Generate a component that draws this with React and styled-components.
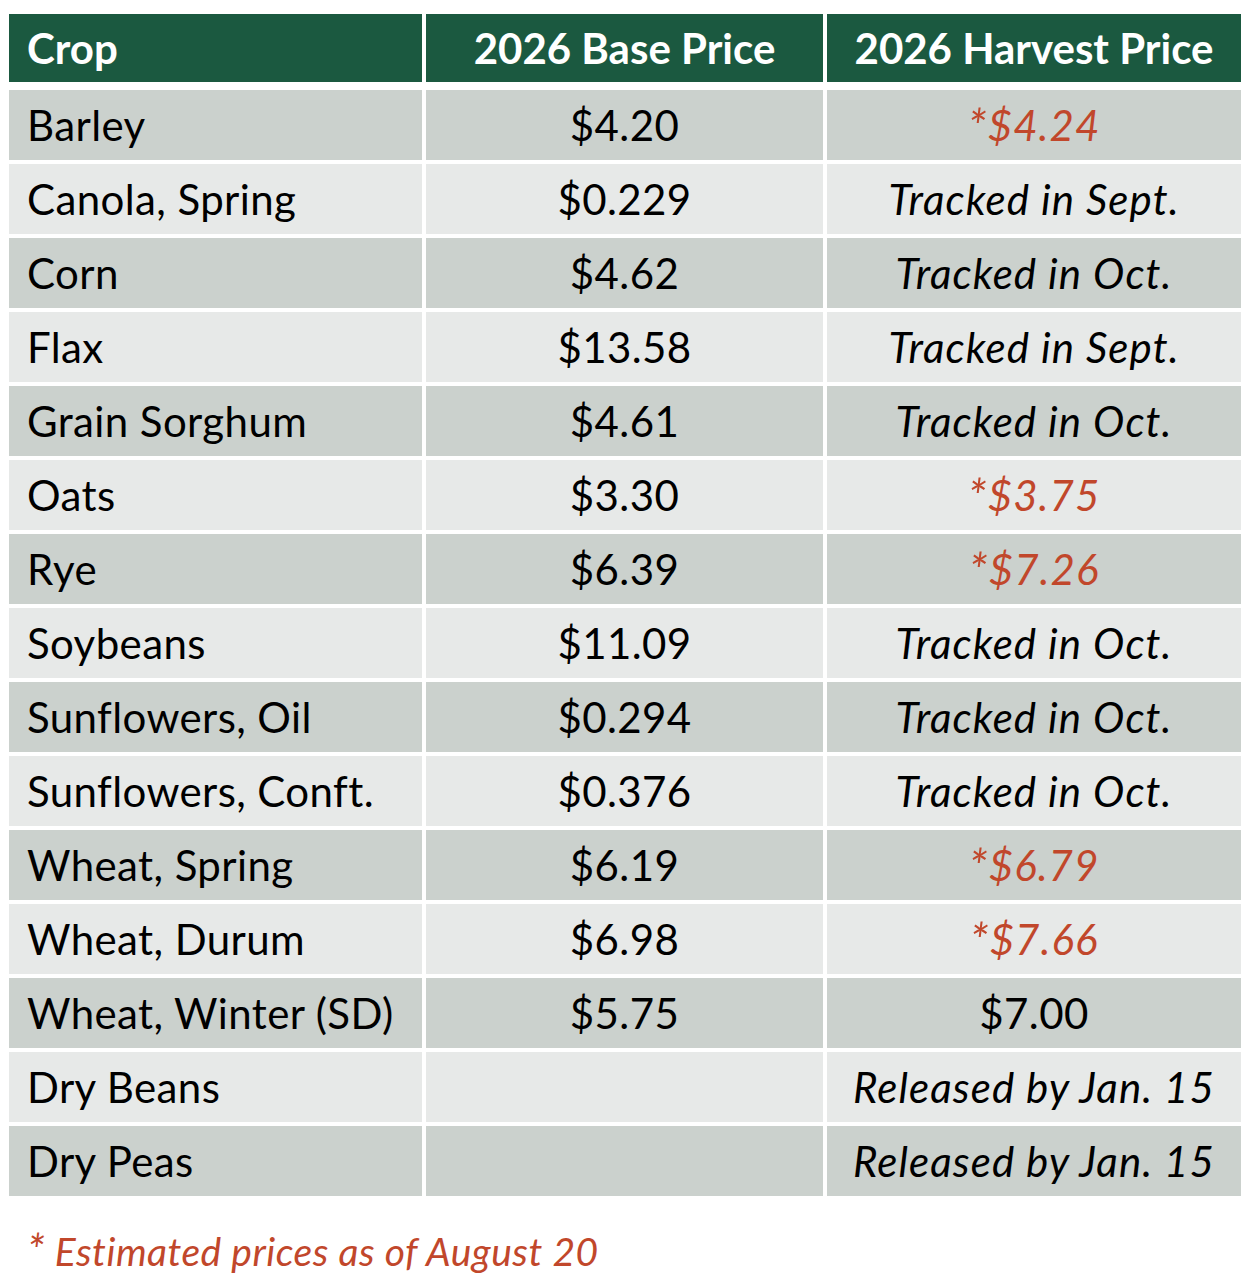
import styled, { createGlobalStyle } from "styled-components";

const GlobalStyle = createGlobalStyle`
  body {
    margin: 0;
    background: #fff;
    font-family: Lato, "Open Sans", sans-serif;
  }
`;

const Page = styled.div`
  padding: 14px 9px 0 9px;
`;

const Grid = styled.div`
  display: grid;
  grid-template-columns: 413px 397px 414px;
  column-gap: 4px;
  row-gap: 4px;
  width: 1232px;
`;

const HeadCell = styled.div`
  background: #1b5940;
  color: #fff;
  height: 68px;
  margin-bottom: 4px;
  display: flex;
  align-items: center;
  justify-content: ${(p) => (p.left ? "flex-start" : "center")};
  padding: 0 18px;
  font-size: 42px;
  font-weight: 700;
  box-sizing: border-box;
`;

const Cell = styled.div`
  background: ${(p) => (p.dark ? "#cbd1cd" : "#e7e9e8")};
  height: 70px;
  display: flex;
  align-items: center;
  justify-content: ${(p) => (p.left ? "flex-start" : "center")};
  padding: 0 18px;
  font-size: 42px;
  line-height: 1;
  color: ${(p) => (p.red ? "#c1472b" : "#000")};
  font-style: ${(p) => (p.italic ? "italic" : "normal")};
  letter-spacing: ${(p) => (p.italic ? "1.1px" : "0.4px")};
  box-sizing: border-box;
`;

const Star = styled.span`
  font-size: 1.15em;
  line-height: 0;
`;

const Note = styled.p`
  margin: 31px 0 0 18px;
  font-size: 39px;
  line-height: 48px;
  font-style: italic;
  letter-spacing: 0.5px;
  color: #c1472b;
`;

const rows = [
  ["Barley", "$4.20", "$4.24", "est"],
  ["Canola, Spring", "$0.229", "Tracked in Sept.", "track"],
  ["Corn", "$4.62", "Tracked in Oct.", "track"],
  ["Flax", "$13.58", "Tracked in Sept.", "track"],
  ["Grain Sorghum", "$4.61", "Tracked in Oct.", "track"],
  ["Oats", "$3.30", "$3.75", "est"],
  ["Rye", "$6.39", "$7.26", "est"],
  ["Soybeans", "$11.09", "Tracked in Oct.", "track"],
  ["Sunflowers, Oil", "$0.294", "Tracked in Oct.", "track"],
  ["Sunflowers, Conft.", "$0.376", "Tracked in Oct.", "track"],
  ["Wheat, Spring", "$6.19", "$6.79", "est"],
  ["Wheat, Durum", "$6.98", "$7.66", "est"],
  ["Wheat, Winter (SD)", "$5.75", "$7.00", "final"],
  ["Dry Beans", "", "Released by Jan. 15", "track"],
  ["Dry Peas", "", "Released by Jan. 15", "track"],
];

export default function App() {
  return (
    <Page>
      <GlobalStyle />
      <Grid>
        <HeadCell left>Crop</HeadCell>
        <HeadCell>2026 Base Price</HeadCell>
        <HeadCell>2026 Harvest Price</HeadCell>
        {rows.map(([crop, base, harvest, kind], i) => {
          const dark = i % 2 === 0;
          return [
            <Cell key={crop + "a"} dark={dark} left>{crop}</Cell>,
            <Cell key={crop + "b"} dark={dark}>{base}</Cell>,
            <Cell
              key={crop + "c"}
              dark={dark}
              italic={kind !== "final"}
              red={kind === "est"}
            >
              {kind === "est" && <Star>*</Star>}
              {harvest}
            </Cell>,
          ];
        })}
      </Grid>
      <Note><Star>*</Star> Estimated prices as of August 20</Note>
    </Page>
  );
}
